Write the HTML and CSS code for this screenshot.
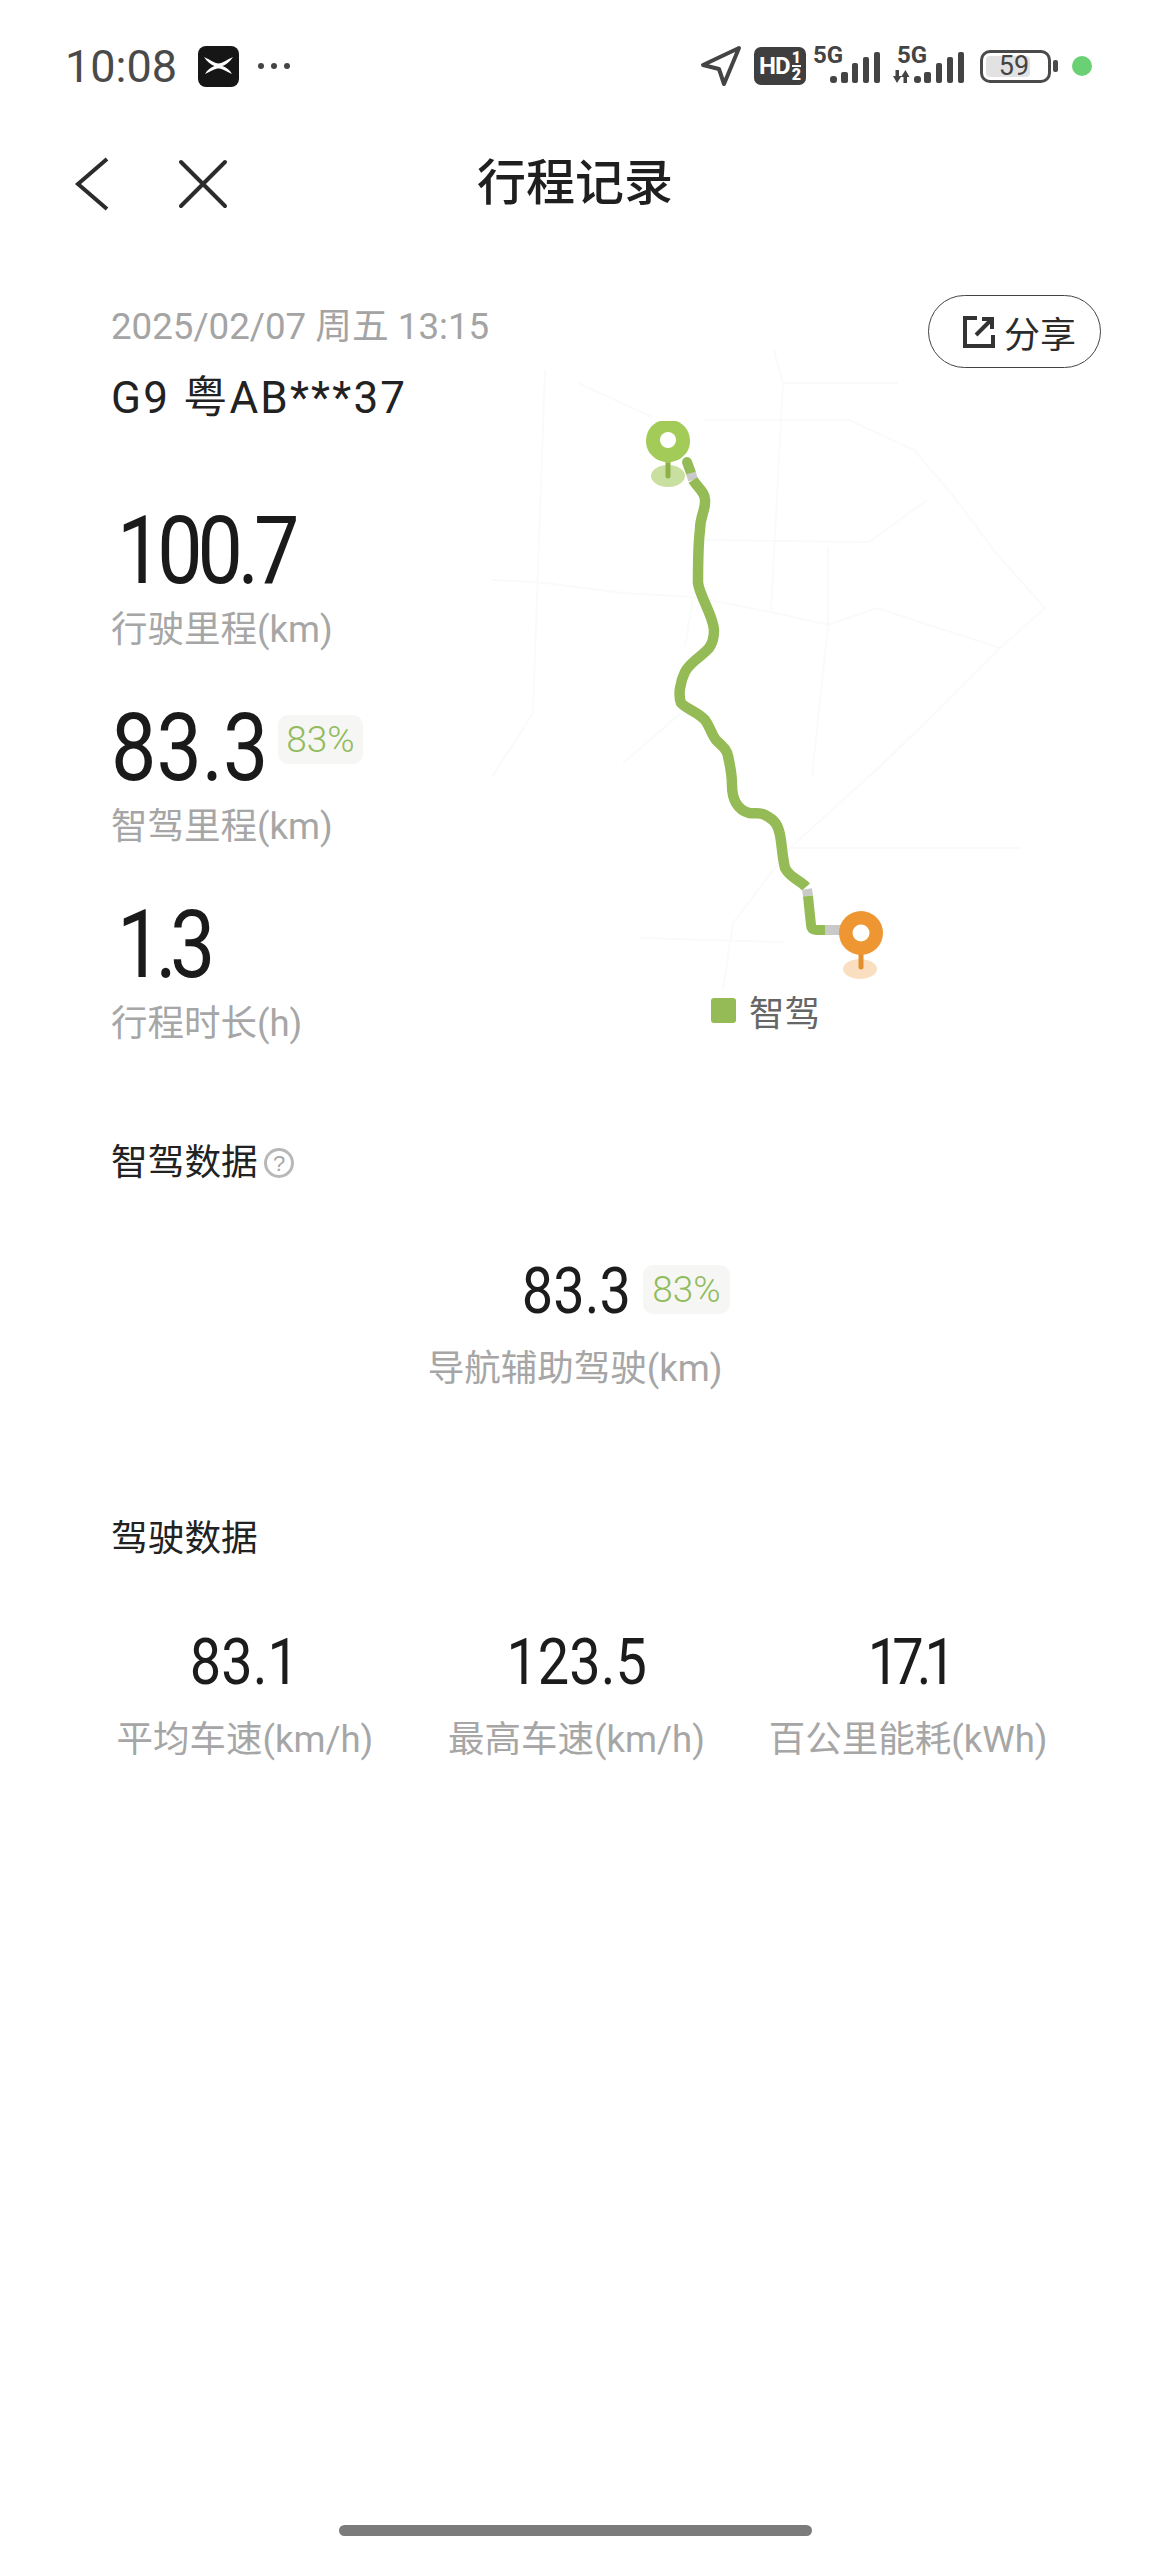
FILE: index.html
```html
<!DOCTYPE html>
<html lang="zh-CN">
<head>
    <meta charset="UTF-8">
    <title>行程记录</title>
    <link rel="stylesheet" href="styles.css">
</head>
<body>
<div class="page">
    <!-- status bar -->
    <div class="status">
        <div class="status-left">
            <span class="clock">10:08</span>
            <span class="app-badge">
                <svg width="41" height="41" viewBox="0 0 41 41"><path d="M6 11 C13 14 17 17.500 20.500 17.500 C24 17.500 28 14 35 11 C32 16 28 18.500 24.500 20 C28 21.500 32 24 34 28 C28 25 24 22.500 20.500 22.500 C17 22.500 13 25 7 28 C9 24 13 21.500 16.500 20 C13 18.500 9 16 6 11Z" fill="#fff"/></svg>
            </span>
            <span class="dots"><i></i><i></i><i></i></span>
        </div>
        <div class="status-right">
            <svg class="nav-arrow" width="42" height="42" viewBox="0 0 42 42"><path d="M39 3 L3 20 L19 24 L24 39Z" fill="none" stroke="#444" stroke-width="4" stroke-linejoin="round"/></svg>
            <span class="hd">HD<span class="hd-nums"><b>1</b><b>2</b></span></span>
            <span class="signal"><span class="net">5G</span><svg width="50" height="38" viewBox="0 0 50 38"><rect x="0" y="29" width="7" height="7" rx="3"/><rect x="11" y="25" width="7" height="11" rx="2"/><rect x="22" y="16" width="6" height="20" rx="2"/><rect x="33" y="10" width="6" height="26" rx="2"/><rect x="44" y="5" width="6" height="31" rx="2"/></svg></span>
            <span class="signal second"><span class="net">5G</span><svg width="71" height="38" viewBox="0 0 71 38"><path d="M2.500 23 H6 V29 H8.500 L4 36 L0 29 H2.500Z M10.500 36 H14 V30 H16.500 L12.500 23 L8 30 H10.500Z" fill="#444"/><rect x="21" y="29" width="7" height="7" rx="3"/><rect x="31" y="25" width="7" height="11" rx="2"/><rect x="43" y="16" width="6" height="20" rx="2"/><rect x="54" y="10" width="6" height="26" rx="2"/><rect x="65" y="5" width="6" height="31" rx="2"/></svg></span>
            <span class="battery"><span class="battery-fill"></span><span class="battery-num">59</span></span>
            <span class="battery-tip"></span>
            <span class="green-dot"></span>
        </div>
    </div>

    <!-- title -->
    <div class="topbar">
        <svg class="ico-back" width="36" height="54" viewBox="0 0 36 54"><path d="M33 2 L4 27 L33 52" fill="none" stroke="#2b2b2b" stroke-width="4"/></svg>
        <svg class="ico-close" width="50" height="50" viewBox="0 0 50 50"><path d="M3 3 L47 47 M47 3 L3 47" fill="none" stroke="#2b2b2b" stroke-width="4" stroke-linecap="round"/></svg>
        <h1>行程记录</h1>
    </div>

    <!-- trip summary + map -->
    <div class="trip">
        <div class="trip-info">
            <div class="trip-date">2025/02/07 周五 13:15</div>
            <div class="trip-car">G9 粤AB***37</div>
            <div class="stat first">
                <div class="stat-num tight">100.7</div>
                <div class="stat-label">行驶里程(km)</div>
            </div>
            <div class="stat">
                <div class="stat-row"><span class="stat-num">83.3</span><span class="pct">83%</span></div>
                <div class="stat-label">智驾里程(km)</div>
            </div>
            <div class="stat">
                <div class="stat-num tighter">1.3</div>
                <div class="stat-label">行程时长(h)</div>
            </div>
        </div>
        <div class="map">
            <button class="share">
                <svg width="32" height="32" viewBox="0 0 32 32"><path d="M14 2 H2 V30 H30 V19" fill="none" stroke="#333" stroke-width="4"/><path d="M13 19 L28 4 M19 3 H29 V13" fill="none" stroke="#333" stroke-width="4"/></svg>
                <span>分享</span>
            </button>
            <svg class="route" width="640" height="700" viewBox="480 350 640 700">
                <g fill="none" stroke="#f9fbfa" stroke-width="2">
                    <path d="M545 370 L533 713 L492 777"/>
                    <path d="M492 580 L537 582 L623 593 L693 597 L771 612 L828 625 L877 608 L1000 648 L1045 608"/>
                    <path d="M771 340 L783 383 L771 610"/>
                    <path d="M703 420 L849 420 L914 450 L951 493 L996 553 L1045 608"/>
                    <path d="M783 383 L898 383 M578 383 L652 417"/>
                    <path d="M705 540 L869 542 L927 500"/>
                    <path d="M828 547 L828 625 L812 777"/>
                    <path d="M693 597 L685 647 M681 713 L623 763"/>
                    <path d="M1000 648 L931 717 L869 777"/>
                    <path d="M887 760 L790 848 L733 923 L723 990"/>
                    <path d="M790 848 L1020 848 M640 938 L783 942"/>
                </g>
                <path d="M687 462 L691 473" fill="none" stroke="#94bb55" stroke-width="10" stroke-linecap="round"/>
                <path d="M691 473 L693 480" fill="none" stroke="#c9c9c9" stroke-width="10"/>
                <path d="M693 480 C698 488 705 492 705 500 C706 510 700 515 700 530 C698 545 698 565 698 583 C700 597 713 615 714 630 C714 640 712 644 709 648 C700 658 690 662 685 672 C680 682 678 695 681 703 C686 709 697 711 705 720 C710 727 712 735 716 740 C724 748 727 750 728 756 C730 765 732 775 732 785 C732 800 738 810 749 813 C755 814 760 812 765 815 C775 820 778 825 780 835 C782 845 782 855 785 868 C790 878 800 880 806 887" fill="none" stroke="#94bb55" stroke-width="10.500" stroke-linejoin="round"/>
                <path d="M807 889 L808 896" fill="none" stroke="#c9c9c9" stroke-width="10"/>
                <path d="M808 896 L811 925 Q811 930 816 930 H826" fill="none" stroke="#94bb55" stroke-width="10"/>
                <path d="M825 930 H842" fill="none" stroke="#c9c9c9" stroke-width="10"/>

                <ellipse cx="668" cy="476" rx="17" ry="11" fill="#c9dfa0"/>
                <path d="M668 458 V476" stroke="#8cb04a" stroke-width="5" stroke-linecap="round"/>
                <path d="M660 421 H676 C685 424 690 432 690 441 C690 450 685 456 678 460 L668 463 L658 460 C651 456 646 450 646 441 C646 432 651 424 660 421Z" fill="#a3cb57"/>
                <circle cx="668" cy="440" r="8" fill="#fff"/>

                <ellipse cx="860" cy="969" rx="17" ry="10" fill="#f9dfc0"/>
                <path d="M861 950 V967" stroke="#e48f2f" stroke-width="5" stroke-linecap="round"/>
                <circle cx="861" cy="933" r="22" fill="#ee9732"/>
                <circle cx="861" cy="933" r="8.500" fill="#fff"/>
            </svg>
            <div class="legend"><i></i><span>智驾</span></div>
        </div>
    </div>

    <!-- smart driving -->
    <div class="section-title smart-title">智驾数据
        <svg width="32" height="32" viewBox="0 0 32 32"><circle cx="16" cy="16" r="13.500" fill="none" stroke="#b8b8b8" stroke-width="3"/><text x="16" y="24" text-anchor="middle" class="help-mark">?</text></svg>
    </div>
    <div class="smart">
        <div class="smart-row"><span class="mid-num">83.3</span><span class="pct small">83%</span></div>
        <div class="mid-label">导航辅助驾驶(km)</div>
    </div>

    <!-- driving -->
    <div class="section-title drive-title">驾驶数据</div>
    <div class="drive">
        <div class="drive-col"><div class="mid-num">83.1</div><div class="mid-label">平均车速(km/h)</div></div>
        <div class="drive-col"><div class="mid-num">123.5</div><div class="mid-label">最高车速(km/h)</div></div>
        <div class="drive-col"><div class="mid-num tight">17.1</div><div class="mid-label">百公里能耗(kWh)</div></div>
    </div>

    <div class="home-bar"></div>
</div>
</body>
</html>
```

FILE: styles.css
```css
* { box-sizing: border-box; }
html, body { margin: 0; padding: 0; background: #fff; }
body { font-family: Roboto, "Noto Sans CJK SC", sans-serif; color: #1c1c1c; }
.page { width: 1150px; height: 2559px; display: flex; flex-direction: column; position: relative; overflow: hidden; }

/* status bar */
.status { height: 132px; padding: 0 58px 0 65px; display: flex; justify-content: space-between; align-items: center; }
.status-left { display: flex; align-items: center; }
.clock { font-size: 45px; color: #4a4a4a; width: 133px; }
.app-badge { width: 41px; height: 41px; background: #161616; border-radius: 8px; display: block; }
.app-badge svg { display: block; }
.dots { display: flex; gap: 7px; margin-left: 19px; }
.dots i { width: 6px; height: 6px; background: #444; border-radius: 50%; }
.status-right { display: flex; align-items: center; }
.nav-arrow { margin-right: 12px; }
.hd { width: 52px; height: 38px; background: #3f3f3f; color: #fff; border-radius: 7px; font-size: 24px; font-weight: 700; letter-spacing: -1px; display: flex; align-items: center; justify-content: center; }
.hd-nums { display: flex; flex-direction: column; align-items: center; font-size: 16px; line-height: 15px; margin-left: 2px; letter-spacing: 0; }
.hd-nums b:first-child { border-bottom: 2px solid #fff; }
.signal { position: relative; width: 67px; height: 38px; margin-left: 7px; display: flex; justify-content: flex-end; }
.signal svg { display: block; fill: #444; }
.signal.second { width: 71px; margin-left: 13px; }
.net { position: absolute; left: 0; top: 0; font-size: 24px; line-height: 17px; font-weight: 700; color: #444; }
.signal.second .net { left: 4px; }
.battery { position: relative; width: 71px; height: 33px; border: 3.5px solid #4a4a4a; border-radius: 10px; margin-left: 16px; display: block; }
.battery-fill { position: absolute; left: 3px; top: 3px; bottom: 3px; width: 44px; background: #e2e2e2; border-radius: 4px; }
.battery-num { position: absolute; left: 0; right: 3px; top: -2px; text-align: center; font-size: 27px; color: #444; line-height: 30px; }
.battery-tip { width: 5px; height: 12px; background: #4a4a4a; border-radius: 2px; margin-left: 2px; }
.green-dot { width: 20px; height: 20px; background: #69d073; border-radius: 50%; margin-left: 14px; }

/* title */
.topbar { height: 104px; position: relative; display: flex; align-items: center; padding-left: 74px; }
.ico-close { margin-left: 68px; }
.topbar h1 { position: absolute; left: 0; right: 0; margin: 0; text-align: center; font-size: 49px; font-weight: 500; color: #1f1f1f; line-height: 104px; }

/* trip */
.trip { display: flex; height: 903px; position: relative; }
.trip-info { width: 480px; padding-left: 111px; padding-top: 68px; }
.trip-date { font-size: 36.700px; line-height: 46px; color: #a4a4a4; white-space: nowrap; }
.trip-car { font-size: 44px; line-height: 50px; margin-top: 23px; color: #222; white-space: nowrap; letter-spacing: 2.2px; }
.stat { margin-top: 46px; }
.stat.first { margin-top: 80px; }
.stat-row { display: flex; align-items: center; }
/* no condensed font installed, so the numbers are squeezed sideways */
.stat-num { display: block; font-size: 95px; line-height: 96px; color: #1a1a1a; transform: scaleX(0.85); transform-origin: left center; }
.stat-num.tight { letter-spacing: -6px; margin-left: 6px; }
.stat-num.tighter { letter-spacing: -8px; margin-left: 6px; }
.stat-label { font-size: 36.500px; line-height: 48px; margin-top: 7px; color: #a6a6a6; white-space: nowrap; }
.pct { background: #f6f7f5; color: #92bb5e; border-radius: 10px; font-size: 37px; font-weight: 300; line-height: 49px; padding: 0 8px; margin: 0 0 18px -18px; }
.pct.small { margin: 0 0 4px 12px; padding: 0 9px; }
.map { flex: 1; position: relative; }
.route { position: absolute; left: 0; top: 114px; }
.share { position: absolute; right: 49px; top: 59px; width: 173px; height: 73px; background: #fff; border: 1.5px solid #444; border-radius: 37px; display: flex; align-items: center; gap: 9px; padding: 0 0 0 34px; font-family: inherit; font-size: 36px; color: #2b2b2b; }
.share svg { flex: none; }
.legend { position: absolute; left: 231px; top: 749px; display: flex; align-items: center; gap: 13px; font-size: 35.500px; color: #666; }
.legend i { width: 25px; height: 25px; background: #94bb55; border-radius: 3px; }

/* sections */
.section-title { padding-left: 111px; font-size: 36.700px; line-height: 48px; color: #222; display: flex; align-items: center; gap: 5px; }
.help-mark { font-family: "Liberation Sans", sans-serif; font-size: 22px; fill: #a8a8a8; }
.smart { margin-top: 66px; display: flex; flex-direction: column; align-items: center; }
.smart-row { display: flex; align-items: center; margin-left: 102px; }
.mid-num { display: block; font-size: 65px; line-height: 76px; color: #1c1c1c; transform: scaleX(0.86); }
.mid-num.tight { letter-spacing: -8px; }
.smart-row .mid-num { margin: 0 -9px; }
.mid-label { font-size: 36.500px; line-height: 48px; color: #a6a6a6; white-space: nowrap; margin-top: 16px; }
.drive-title { margin-top: 122px; }
.drive { margin-top: 61px; padding: 0 76px 0 79px; display: grid; grid-template-columns: 1fr 1fr 1fr; }
.drive-col { display: flex; flex-direction: column; align-items: center; }

.home-bar { position: absolute; left: 339px; top: 2525px; width: 473px; height: 11px; background: #7b7b7b; border-radius: 6px; }
```
